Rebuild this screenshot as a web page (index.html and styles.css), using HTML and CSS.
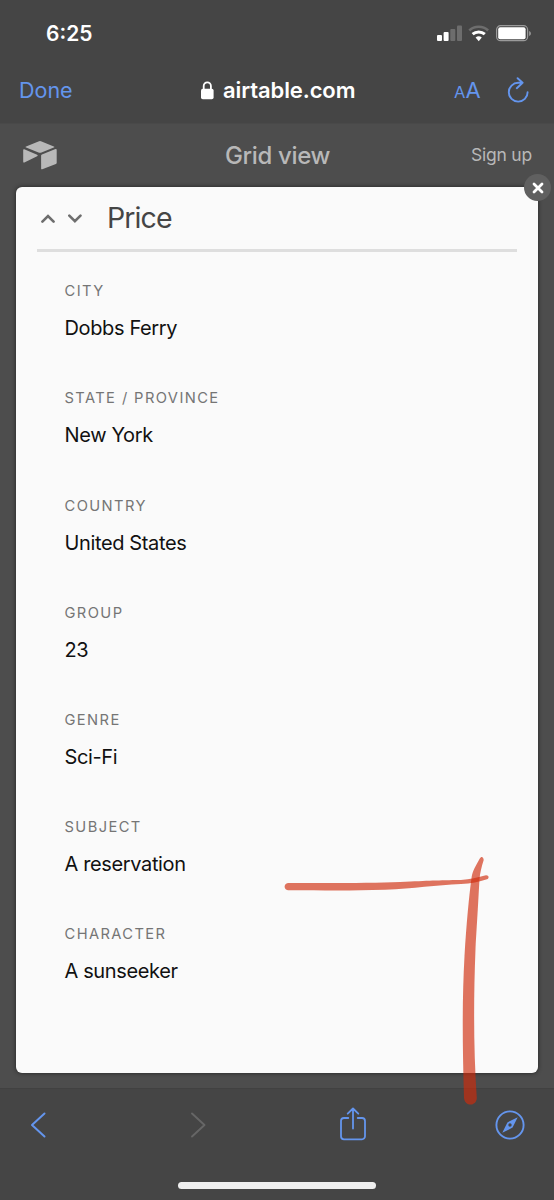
FILE: index.html
```
<!doctype html>
<html lang="en">

<head>
  <meta charset="utf-8">
  <meta name="viewport" content="width=device-width, initial-scale=1">
  <title>Grid view - Airtable</title>
  <link rel="stylesheet" href="styles.css">
</head>

<body>
  <div class="status-bar">
    <span class="time">6:25</span>
    <svg class="status-icons" width="96" height="20" viewBox="0 0 96 20">
      <g fill="#fff">
        <rect x="1" y="11" width="5" height="6" rx="1"/>
        <rect x="7.6" y="8" width="5" height="9" rx="1"/>
        <rect x="14.3" y="5" width="5" height="12" rx="1" opacity=".22"/>
        <rect x="21" y="1.5" width="5" height="15.5" rx="1" opacity=".22"/>
      </g>
      <path d="M33.3 6.4a14 14 0 0 1 18.8 0" fill="none" stroke="#fff" stroke-width="2.7" opacity=".22"/>
      <path d="M36.6 10.2a9.2 9.2 0 0 1 12.2 0" fill="none" stroke="#fff" stroke-width="3"/>
      <path d="M39.6 13.6a4.7 4.7 0 0 1 6.2 0l-3.1 3.6z" fill="#fff"/>
      <rect x="60.6" y="1.7" width="31" height="15" rx="4" fill="none" stroke="#9a9a9a" stroke-width="1.2"/>
      <rect x="62.2" y="3.2" width="27.4" height="12" rx="2" fill="#fff"/>
      <path d="M93.1 7c2.4.7 2.4 4.3 0 5z" fill="#9a9a9a"/>
    </svg>
  </div>

  <div class="address-bar">
    <a class="done" href="#">Done</a>
    <div class="address">
      <svg width="13" height="19" viewBox="0 0 13 19">
        <rect x="0" y="7.8" width="12.6" height="10.4" rx="1.8" fill="#fff"/>
        <path d="M2.7 8.5V5a3.6 3.6 0 0 1 7.2 0v3.5" fill="none" stroke="#fff" stroke-width="1.8"/>
      </svg>
      <span>airtable.com</span>
    </div>
    <span class="text-size"><small>A</small>A</span>
    <svg class="reload" width="22" height="26" viewBox="0 0 22 26">
      <path d="M20.6 15.2A9.4 9.4 0 1 1 11.2 5.8h4.400M10.6 1.200l5 4.600-5.800 5.400" fill="none" stroke="#6495ed" stroke-width="1.9" stroke-linecap="round" stroke-linejoin="round"/>
    </svg>
  </div>

  <main class="page">
    <header class="view-header">
      <svg width="34" height="29" viewBox="0 0 34 29" fill="#b8b8b8">
        <path d="M15.4.4q1.6-.7 3.2 0l12.2 5q1.2.5 0 1l-12.3 5q-1.5.6-3 0L3.1 6.4q-1.2-.5 0-1z"/>
        <path d="M18.1 14.7q0-.9.8-1.3L32.5 8.1q1.2-.4 1.2.8v12.8q0 .8-.8 1.2l-13.6 5.3q-1.2.4-1.2-.8z"/>
        <path d="M.2 9.1q0-1.2 1.1-.8l12.8 5.4q1.5.7 0 1.5l-12.7 6.2q-1.2.5-1.2-.7z"/>
      </svg>
      <span class="view-name">Grid view</span>
      <a class="sign-up" href="#">Sign up</a>
    </header>

    <section class="record">
      <button class="close" aria-label="Close">
        <svg width="12" height="12" viewBox="0 0 12 12">
          <path d="M2 2l8 8M10 2l-8 8" stroke="#fff" stroke-width="2.8" stroke-linecap="round"/>
        </svg>
      </button>
      <div class="record-header">
        <svg width="42" height="12" viewBox="0 0 42 12" fill="none" stroke="#6e6e6e" stroke-width="2.6">
          <path d="M1.4 9.6l5.6-5.6 5.6 5.6M28.3 3.6l5.6 5.6 5.6-5.6" stroke-linecap="round"/>
        </svg>
        <h1>Price</h1>
      </div>
      <dl class="fields">
        <div class="field"><dt>City</dt><dd>Dobbs Ferry</dd></div>
        <div class="field"><dt>State / Province</dt><dd>New York</dd></div>
        <div class="field"><dt>Country</dt><dd>United States</dd></div>
        <div class="field"><dt>Group</dt><dd>23</dd></div>
        <div class="field"><dt>Genre</dt><dd>Sci-Fi</dd></div>
        <div class="field"><dt>Subject</dt><dd>A reservation</dd></div>
        <div class="field"><dt>Character</dt><dd>A sunseeker</dd></div>
      </dl>
    </section>
  </main>

  <nav class="toolbar">
    <div class="toolbar-icons">
      <svg width="16" height="26" viewBox="0 0 16 26" fill="none" stroke="#6495ed" stroke-width="2" stroke-linecap="round" stroke-linejoin="round">
        <path d="M14.5 1.5L2 13l12.5 11.5"/>
      </svg>
      <svg class="forward" width="16" height="26" viewBox="0 0 16 26" fill="none" stroke="#666" stroke-width="1.9" stroke-linecap="round" stroke-linejoin="round">
        <path d="M2 1.5L14.5 13 2 24.5"/>
      </svg>
      <svg class="share" width="26" height="34" viewBox="0 0 26 34" fill="none" stroke="#6495ed" stroke-width="1.8" stroke-linecap="round" stroke-linejoin="round">
        <path d="M8.3 11H4a3 3 0 0 0-3 3v15.3a3 3 0 0 0 3 3h18a3 3 0 0 0 3-3V14a3 3 0 0 0-3-3h-4.3M13 21.5V1.8M7.7 6.7L13 1.5l5.3 5.2"/>
      </svg>
      <svg class="compass" width="30" height="30" viewBox="0 0 30 30">
        <circle cx="15" cy="15" r="13.6" fill="none" stroke="#6495ed" stroke-width="1.9"/>
        <path fill-rule="evenodd" d="M22.7 7.3l-5.1 10.3-10.3 5.1 5.1-10.3zM15 13.3a1.7 1.7 0 1 0 0 3.4 1.7 1.7 0 0 0 0-3.4z" fill="#6495ed"/>
      </svg>
    </div>
    <div class="home-indicator"></div>
  </nav>

  <!-- marker strokes drawn over the screen -->
  <svg class="markup" width="554" height="1200" viewBox="0 0 554 1200">
    <path d="M288 883C327 883 371 883.3 400 882C430 880.7 437 880.2 461 880C470 879.5 478 877 486 875.2C489 875 489.5 878.5 487 879.2C479 882 471 883.5 461 884C436 885 414 888.5 385 889.7C347 891 318 890.2 288 890.2C283.5 889.5 283.5 883.7 288 883Z"/>
    <path d="M479.8 858.5C475.5 866 473 870.5 471.8 876C469 896 466.5 923 464.5 956C462 1002 462.5 1046 464 1098C465 1107 476.5 1106.5 476.8 1098C473.500 1050 473.5 1000 475.5 949C477.5 916 478.5 898 479.5 879C480 873 481.5 867 483.7 860C483.5 856.5 481 856 479.8 858.5Z"/>
  </svg>
</body>
</html>
```
FILE: styles.css
```
* {
  box-sizing: border-box;
}
body {
  margin: 0;
  width: 554px;
  height: 1200px;
  display: flex;
  flex-direction: column;
  overflow: hidden;
  background-color: #454545;
  font-family: Inter, "Liberation Sans", sans-serif;
}
svg {
  display: block;
  flex: none;
}
a {
  color: #6495ed;
  text-decoration: none;
}
.status-bar {
  height: 66px;
  display: flex;
  justify-content: space-between;
  padding: 20px 22px 0 46px;
  color: #fff;
}
.time {
  font-size: 21px;
  font-weight: 600;
  line-height: 28px;
}
.status-icons {
  margin-top: 4px;
}
.address-bar {
  height: 57px;
  display: grid;
  grid-template-columns: 180px 1fr 53px 24px;
  align-items: start;
  padding: 8px 23px 0 19px;
  line-height: 32px;
}
.done {
  font-size: 21.5px;
}
.address {
  display: flex;
  gap: 9px;
  padding-left: 2px;
  color: #fff;
  font-size: 22px;
  font-weight: 600;
  letter-spacing: -0.1px;
}
.address svg {
  margin-top: 7px;
}
.text-size {
  color: #6495ed;
  font-size: 22px;
}
.text-size small {
  font-size: 16.5px;
}
.reload {
  margin-top: 3px;
}
.page {
  height: 965px;
  padding: 0 16px;
  background-color: #4d4d4d;
  border-top: 1px solid #494949;
}
.view-header {
  height: 63px;
  display: grid;
  grid-template-columns: 100px 1fr 100px;
  align-items: center;
  padding: 0 6px 1px 7px;
  color: #b8b8b8;
}
.view-name {
  text-align: center;
  font-size: 24px;
  font-weight: 500;
  letter-spacing: -0.35px;
}
.sign-up {
  text-align: right;
  color: #b8b8b8;
  font-size: 17.5px;
  letter-spacing: -0.2px;
  padding-bottom: 1px;
}
.record {
  position: relative;
  height: 886px;
  padding: 0 21px;
  background-color: #fafafa;
  border-radius: 6px;
  box-shadow: 0 0 4px #222;
}
.close {
  position: absolute;
  top: -13px;
  right: -13px;
  width: 27px;
  height: 27px;
  display: grid;
  place-items: center;
  padding: 0;
  border: 0;
  border-radius: 50%;
  background-color: #606060;
}
.record-header {
  height: 65px;
  display: flex;
  align-items: center;
  gap: 24px;
  padding: 0 0 1px 4px;
  border-bottom: 3px solid #dedede;
}
h1 {
  margin: 0;
  color: #454545;
  font-size: 28.5px;
  font-weight: 400;
  letter-spacing: -0.9px;
}
.fields {
  margin: 0;
  padding: 28.3px 27px 0 27.5px;
}
.field {
  height: 107.15px;
}
dt {
  color: #757575;
  font-size: 14.7px;
  line-height: 22px;
  letter-spacing: 1.4px;
  text-transform: uppercase;
}
dd {
  margin: 12px 0 0;
  color: #111;
  font-size: 20px;
  line-height: 28px;
  letter-spacing: -0.37px;
}
.toolbar {
  height: 112px;
  border-top: 1px solid #414141;
}
.toolbar-icons {
  height: 93px;
  display: grid;
  grid-template-columns: 160px 150px 155px 30px;
  align-items: start;
  padding: 23px 29px 0 30px;
}
.share {
  margin-top: -5px;
}
.compass {
  margin-top: -2px;
}
.home-indicator {
  width: 198px;
  height: 7px;
  margin: 0 auto;
  border-radius: 4px;
  background-color: #efefef;
}
.markup {
  position: absolute;
  top: 0;
  left: 0;
  pointer-events: none;
}
.markup path {
  fill: #cf2b0b;
  opacity: .65;
}
```
